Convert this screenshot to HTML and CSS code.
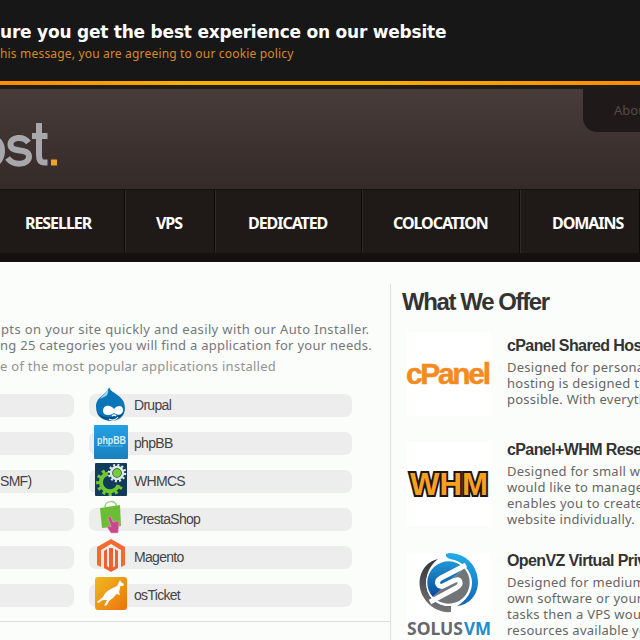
FILE: index.html
```
<!DOCTYPE html>
<html lang="en">
<head>
<meta charset="utf-8">
<title>Web Hosting</title>
<link rel="stylesheet" href="styles.css">
</head>
<body>
<section class="cookie">
  <p class="cookie-title">ure you get the best experience on our website</p>
  <p class="cookie-note">his message, you are agreeing to our cookie policy</p>
</section>
<div class="stripe"></div>
<header class="header">
  <svg class="logo" width="60" height="60" viewBox="0 0 60 60">
    <g fill="none" stroke="#a6a8ab" stroke-width="6">
      <ellipse cx="-8.500" cy="29" rx="10.500" ry="13.500"/>
      <path d="M28.500 20.500C23 13.500 10.500 15 10.500 22.500C10.500 32 29 25 29 34.500C29 43 14 44.500 7.500 36"/>
      <path d="M39 1V33Q39 40.500 44 40.500H47.500M32 14H47.500"/>
    </g>
    <rect x="51" y="37.500" width="6" height="6" fill="#f9a01f"/>
  </svg>
  <div class="top-links">Abou</div>
</header>
<nav class="nav">
  <a class="reseller">RESELLER</a>
  <a class="vps">VPS</a>
  <a class="dedicated">DEDICATED</a>
  <a class="colocation">COLOCATION</a>
  <a class="domains">DOMAINS</a>
</nav>
<main class="main">
  <section class="left">
    <p class="copy line1">pts on your site quickly and easily with our Auto Installer.</p>
    <p class="copy line2">ng 25 categories you will find a application for your needs.</p>
    <p class="copy muted">e of the most popular applications installed</p>
    <div class="apps">
      <div class="stub"></div>
      <div class="app">
        <svg width="34" height="36" viewBox="0 0 34 36"><path d="M15 1C17 8 31 9 31 22C31 31 24 35 17 35C9 35 2 30 2 21C2 10 13 9 15 1Z" fill="#0876b8"/><path d="M3 27C8 36 26 37 30 26C24 31 12 34 3 27Z" fill="#035083"/><path d="M14 2C13 8 8 9 6 13C11 10 15 11 14 2Z" fill="#a6d6ee"/><path d="M20 23C23 19 29 19 29 24C29 29 24 30 20 27C16 30 9 30 9 25C9 19 16 18 20 23Z" fill="#fff"/><path d="M15 33C18 35 22 34 24 31M18 30Q20 28 22 30" fill="none" stroke="#fff" stroke-width="1.300"/></svg><span>Drupal</span></div>
      <div class="stub"></div>
      <div class="app">
        <svg width="34" height="36" viewBox="0 0 34 36"><defs><linearGradient id="pb" x2="0" y2="1"><stop stop-color="#24a1e6"/><stop offset="1" stop-color="#1880bd"/></linearGradient></defs><rect y="1" width="34" height="34" rx="1" fill="url(#pb)"/><text x="3" y="20" class="phpbb" textLength="29" lengthAdjust="spacingAndGlyphs">phpBB</text><path d="M6 22H29" stroke="#79c6ef" stroke-width=".7"/></svg><span>phpBB</span></div>
      <div class="stub">SMF)</div>
      <div class="app">
        <svg width="34" height="36" viewBox="0 0 34 36"><rect x="1" y="1" width="32" height="33" rx="1" fill="#103b5a"/><path d="M24.500 23A9 9 0 1 1 14 11.500" fill="none" stroke="#70c82e" stroke-width="4"/><path d="M27 24.500A12 12 0 1 1 13 8.500" fill="none" stroke="#70c82e" stroke-width="3.500" stroke-dasharray="3 3.200"/><circle cx="23" cy="11" r="6" fill="#103b5a" stroke="#e0e7e9" stroke-width="2.500"/><circle cx="23" cy="11" r="8" fill="none" stroke="#e0e7e9" stroke-width="2.500" stroke-dasharray="2 2.200"/><circle cx="23" cy="11" r="4" fill="#76ce32"/></svg><span>WHMCS</span></div>
      <div class="stub"></div>
      <div class="app">
        <svg width="34" height="36" viewBox="0 0 34 36"><path d="M11 7C11 0 23 0 22 6" fill="none" stroke="#9bcf80" stroke-width="1.500"/><path d="M6 8L26 5L27 26L8 28Z" fill="#6bbd36"/><path d="M14 18Q15 15 17 17L19 22L23 21Q25 21 25 24L24 33H17L13 27Q15 25 17 27Z" fill="#c9478b" stroke="#e2a8c7" stroke-width=".6"/></svg><span>PrestaShop</span></div>
      <div class="stub"></div>
      <div class="app">
        <svg width="34" height="36" viewBox="0 0 34 36"><path d="M17 1L31 9V27L27 29V12L17 6L7 12V29L3 27V9Z" fill="#f36b32"/><path d="M17 34L10 30V13L13 11V28L15 29.500V10H19V29.500L21 28V11L24 13V30Z" fill="#ef6130"/></svg><span>Magento</span></div>
      <div class="stub"></div>
      <div class="app">
        <svg width="34" height="36" viewBox="0 0 34 36"><defs><linearGradient id="os" x2="1" y2="1"><stop stop-color="#eebb20"/><stop offset="1" stop-color="#ed720d"/></linearGradient></defs><rect x="1" y="1" width="32" height="33" rx="3" fill="url(#os)"/><path d="M26 4L27 6L30 8L29 10L26.500 10L25 16L26 19L22.500 18L19 22L15 25L13 29L10 30L13 24L9 24L4 27L3 26L9 21C13 13 18 13 23 10Z" fill="#fff"/></svg><span>osTicket</span></div>
    </div>
  </section>
  <aside class="offers">
    <h2>What We Offer</h2>
    <article class="offer first">
      <svg width="84" height="84" viewBox="0 0 84 84"><rect width="84" height="84" fill="#fff"/><text x="-1" y="52" class="cpanel" textLength="85">cPanel</text></svg>
      <div class="desc"><h3>cPanel Shared Hosting</h3><p>Designed for personal<br>hosting is designed to<br>possible. With everyth</p></div>
    </article>
    <article class="offer second">
      <svg width="84" height="84" viewBox="0 0 84 84"><rect width="84" height="84" fill="#fff"/><text x="3" y="53" class="whm" textLength="78" lengthAdjust="spacingAndGlyphs">WHM</text></svg>
      <div class="desc"><h3>cPanel+WHM Reseller</h3><p>Designed for small we<br>would like to manage<br>enables you to create<br>website individually.</p></div>
    </article>
    <article class="offer third">
      <svg width="84" height="84" viewBox="0 0 84 84"><defs><linearGradient id="sv" x2="0" y2="1"><stop stop-color="#2297d5"/><stop offset="1" stop-color="#074c9d"/></linearGradient><linearGradient id="arc" x2="0" y2="1"><stop stop-color="#20ade9"/><stop offset="1" stop-color="#1266b7"/></linearGradient><linearGradient id="dk" x2="0" y2="1"><stop stop-color="#333537"/><stop offset="1" stop-color="#747679"/></linearGradient></defs><rect width="84" height="84" fill="#fff"/><path d="M31 6C13 10 8 31 17 45C23 55 34 60 44 59V53C32 54 22 46 20 36C18 24 21 14 31 6Z" fill="url(#dk)"/><path d="M42 0C60 0 71 14 71 29C71 42 62 52 50 53C69 44 68 9 43 6Q38 4 39 1Z" fill="url(#arc)"/><circle cx="42" cy="30" r="23" fill="#fff"/><path d="M57 15A21 21 0 1 0 26 44Z" fill="url(#sv)"/><path d="M57 15A21 21 0 0 1 26 44Z" fill="#727578"/><path d="M59 12L34 25Q29 28 31 31.500Q33 35 38 32L46 28Q52 25 53 29Q54 32 49 35L23 49" fill="none" stroke="#fff" stroke-width="5"/><text x="0" y="82" class="solus" textLength="56" lengthAdjust="spacingAndGlyphs" fill="#65686c">SOLUS</text><text x="57" y="82" class="solus" textLength="27" lengthAdjust="spacingAndGlyphs" fill="#218dcc">VM</text></svg>
      <div class="desc"><h3>OpenVZ Virtual Private</h3><p>Designed for medium<br>own software or your<br>tasks then a VPS woul<br>resources available yo</p></div>
    </article>
  </aside>
</main>
</body>
</html>
```
FILE: styles.css
```
* { box-sizing: border-box; }
body, p, h2, h3 { margin: 0; }
body {
  width: 640px;
  height: 640px;
  overflow: hidden;
  background: #fbfdfb;
  font-family: "Noto Sans", sans-serif;
  white-space: nowrap;
}
.cookie { height: 81px; padding-top: 20px; background: #171717; }
.cookie-title { color: #fff; font: 700 17px/24px "DejaVu Sans", sans-serif; letter-spacing: -0.220px; }
.cookie-note { color: #d88a22; font-size: 12px; line-height: 20px; letter-spacing: 0.180px; }
.stripe {
  height: 8px;
  border-bottom: 4px solid #1f1b19;
  background: linear-gradient(90deg, #ff8c00, #ffad00 30%, #ffad00 60%, #ff8a00);
}
.header {
  display: flex;
  justify-content: space-between;
  height: 100px;
  background: linear-gradient(#483c3a, #342a28);
}
.logo { margin-top: 33px; overflow: visible; }
.top-links {
  width: 57px;
  height: 43px;
  padding-left: 31px;
  overflow: hidden;
  background: #1f1a19;
  border-radius: 0 0 0 14px;
  color: #544b48;
  font-size: 13px;
  line-height: 43px;
}
.nav {
  display: flex;
  height: 73px;
  background: #1f1a18;
  border-top: 1px solid #171210;
  border-bottom: 9px solid #15110f;
}
.nav a {
  flex: none;
  border-right: 1px solid #0d0a09;
  box-shadow: 1px 0 #302a28;
  color: #fff;
  font: 700 16px/67px "Noto Sans", sans-serif;
  letter-spacing: -1.050px;
}
.reseller { width: 125px; padding-left: 25px; }
.vps { width: 90px; padding-left: 31px; }
.dedicated { width: 147px; padding-left: 33px; }
.colocation { width: 158px; padding-left: 31px; }
.domains { width: 120px; padding-left: 32px; }
.main { display: flex; height: 378px; }
.left { width: 390px; height: 360px; padding-top: 59px; border-bottom: 1px solid #dcdedc; overflow: hidden; }
.copy { height: 16px; color: #777; font-size: 13px; line-height: 16px; letter-spacing: 0.270px; }
.line1 { padding-left: 1px; letter-spacing: 0.370px; }
.muted { margin-top: 5px; color: #929292; }
.apps {
  display: grid;
  grid-template-columns: 74px 263px;
  column-gap: 15px;
  grid-auto-rows: 38px;
  align-items: center;
  margin-top: 12px;
  color: #444;
  font-family: "Liberation Sans", sans-serif;
  font-size: 14px;
  letter-spacing: -0.7px;
}
.stub, .app { height: 23px; background: #ededed; line-height: 23px; }
.stub { border-radius: 0 7px 7px 0; }
.app { display: flex; align-items: center; gap: 6px; padding-left: 5px; border-radius: 7px; }
.app svg { margin-bottom: 2px; }
.phpbb { font: 700 11px "Liberation Sans", sans-serif; letter-spacing: 0; fill: #d5eefb; }
.offers { width: 250px; height: 356px; margin-top: 22px; padding-left: 11px; border-left: 1px solid #dcdedc; overflow: hidden; }
h2 { height: 48px; color: #333; font: 700 24px/36px "Liberation Sans", sans-serif; letter-spacing: -1.400px; }
.offer { display: flex; padding-left: 5px; }
.offer svg { flex: none; overflow: visible; }
.first { height: 110px; }
.second { height: 111px; }
.desc { margin-left: 16px; }
h3 { height: 23px; margin-top: 4px; color: #333; font: 700 16px/20px "Liberation Sans", sans-serif; letter-spacing: -0.600px; }
.second h3, .third h3 { margin-top: -2px; }
.desc p { color: #666; font-size: 13px; line-height: 16px; letter-spacing: 0.250px; }
.cpanel { font: 700 30px "Liberation Sans", sans-serif; fill: #f58a1f; stroke: #f58a1f; stroke-width: .5px; }
.whm { font: 700 31px "Liberation Sans", sans-serif; fill: #f9a01f; stroke: #171717; stroke-width: 4px; paint-order: stroke; }
.solus { font: 700 18px "Noto Sans", sans-serif; }
```
